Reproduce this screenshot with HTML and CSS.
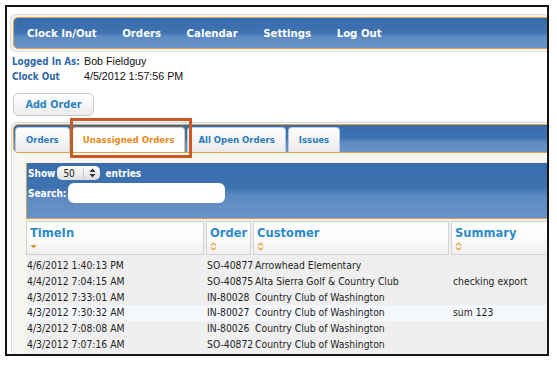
FILE: index.html
```html
<!DOCTYPE html>
<html lang="en">

<head>
    <meta charset="UTF-8">
    <meta name="viewport" content="width=device-width, initial-scale=1.0">
    <link rel="stylesheet" href="styles.css">
    <title>Unassigned Orders</title>
</head>

<body>
    <div class="frame">
        <div class="page">
            <div class="menu-wrap">
                <ul class="menu">
                    <li>Clock In/Out</li>
                    <li>Orders</li>
                    <li>Calendar</li>
                    <li>Settings</li>
                    <li>Log Out</li>
                </ul>
            </div>

            <div class="info">
                <span class="label">Logged In As:</span><span class="value">Bob Fieldguy</span>
                <span class="label">Clock Out</span><span class="value">4/5/2012 1:57:56 PM</span>
            </div>

            <button class="add-btn" type="button">Add Order</button>

            <div class="tabs">
                <ul class="tab-nav">
                    <li class="tab">Orders</li>
                    <li class="tab active">Unassigned Orders</li>
                    <li class="tab">All Open Orders</li>
                    <li class="tab">Issues</li>
                </ul>
                <div class="mark"></div>

                <div class="tab-panel">
                    <div class="dt-top">
                        <div class="dt-length">
                            <span>Show</span>
                            <span class="select">
                                <span class="select-val">50</span>
                                <svg width="7" height="10" viewBox="0 0 7 10">
                                    <path d="M0.5 4L3.5 0.5L6.5 4Z M0.5 6L3.5 9.5L6.5 6Z" fill="#333" />
                                </svg>
                            </span>
                            <span>entries</span>
                        </div>
                        <div class="dt-search">
                            <span>Search:</span>
                            <span class="search-box"></span>
                        </div>
                    </div>

                    <div class="dt-table">
                        <div class="dt-head">
                            <div class="th c-time">TimeIn
                                <svg class="sort" width="7" height="9" viewBox="0 0 7 9">
                                    <path d="M0.5 3H6.5L3.5 6.5Z" fill="#e5922a" />
                                </svg>
                            </div>
                            <div class="th c-order">Order
                                <svg class="sort" width="7" height="9" viewBox="0 0 7 9">
                                    <path d="M1 3.6L3.5 1.2L6 3.6M1 5.4L3.5 7.8L6 5.4" stroke="#e5a03a" stroke-width="1.2" fill="none" />
                                </svg>
                            </div>
                            <div class="th c-cust">Customer
                                <svg class="sort" width="7" height="9" viewBox="0 0 7 9">
                                    <path d="M1 3.6L3.5 1.2L6 3.6M1 5.4L3.5 7.8L6 5.4" stroke="#e5a03a" stroke-width="1.2" fill="none" />
                                </svg>
                            </div>
                            <div class="th c-sum">Summary
                                <svg class="sort" width="7" height="9" viewBox="0 0 7 9">
                                    <path d="M1 3.6L3.5 1.2L6 3.6M1 5.4L3.5 7.8L6 5.4" stroke="#e5a03a" stroke-width="1.2" fill="none" />
                                </svg>
                            </div>
                        </div>

                        <div class="dt-row"><span>4/6/2012 1:40:13 PM</span><span>SO-40877</span><span>Arrowhead Elementary</span><span></span></div>
                        <div class="dt-row"><span>4/4/2012 7:04:15 AM</span><span>SO-40875</span><span>Alta Sierra Golf &amp; Country Club</span><span>checking export</span></div>
                        <div class="dt-row"><span>4/3/2012 7:33:01 AM</span><span>IN-80028</span><span>Country Club of Washington</span><span></span></div>
                        <div class="dt-row hover"><span>4/3/2012 7:30:32 AM</span><span>IN-80027</span><span>Country Club of Washington</span><span>sum 123</span></div>
                        <div class="dt-row"><span>4/3/2012 7:08:08 AM</span><span>IN-80026</span><span>Country Club of Washington</span><span></span></div>
                        <div class="dt-row"><span>4/3/2012 7:07:16 AM</span><span>SO-40872</span><span>Country Club of Washington</span><span></span></div>
                    </div>
                </div>
            </div>
        </div>
    </div>
</body>

</html>
```

FILE: styles.css
```css
* {
    margin: 0;
    padding: 0;
    box-sizing: border-box;
}

body {
    background-color: white;
    font-family: "DejaVu Sans Condensed", "DejaVu Sans", sans-serif;
    font-stretch: condensed;
}

ul {
    list-style: none;
}

.frame {
    margin: 5px;
    width: 544px;
    height: 351px;
    border: 2px solid #151515;
    overflow: hidden;
}

.page {
    width: 620px;
    padding-left: 3px;
}

/* top menu */
.menu-wrap {
    margin-top: 7px;
    padding: 2px;
    border: 1px solid #dcdcdc;
    border-radius: 5px;
    background-color: #f3f3f3;
}

.menu {
    display: flex;
    height: 32px;
    align-items: center;
    padding-left: 13px;
    border: 1px solid #e5a04a;
    border-radius: 5px;
    background: linear-gradient(to bottom, #386cad 0%, #3e72b1 48%, #5d8ac3 62%, #6993c8 100%);

    li {
        color: white;
        font-weight: bold;
        font-size: 11.3px;
        padding-right: 25.5px;
    }
}

/* login info */
.info {
    display: grid;
    grid-template-columns: 72px auto;
    margin: 2px 0 0 2px;
    line-height: 15px;

    .label {
        color: #2f6aa5;
        font-weight: bold;
        font-size: 9.8px;
    }

    .value {
        font-family: "Liberation Sans", Arial, sans-serif;
        font-stretch: normal;
        font-size: 10.7px;
        color: #111;
    }
}

.add-btn {
    display: block;
    margin: 9px 0 0 3px;
    width: 81px;
    height: 23px;
    border: 1px solid #c9c9c9;
    border-radius: 5px;
    background: linear-gradient(to bottom, #ffffff, #ececec);
    color: #2f84c0;
    font-family: inherit;
    font-stretch: condensed;
    font-weight: bold;
    font-size: 10.8px;
}

/* tabs */
.tabs {
    position: relative;
    margin: 6px 0 0 1px;
    padding: 1px;
    border: 1px solid #d9d9d9;
    border-radius: 5px;
    background-color: #f6f6f4;
}

.tab-nav {
    display: flex;
    gap: 2px;
    height: 29px;
    padding: 2px 2px 0 1px;
    border: 1px solid #e2a14d;
    border-radius: 5px;
    background: linear-gradient(to bottom, #386cad 0%, #3e72b1 48%, #5d8ac3 62%, #6993c8 100%);

    .tab {
        height: 25px;
        line-height: 24px;
        padding: 0 10px;
        border: 1px solid #b9c8da;
        border-bottom: none;
        border-radius: 4px 4px 0 0;
        background: linear-gradient(to bottom, #ffffff, #eaeaea);
        color: #2b7bbb;
        font-weight: bold;
        font-size: 9.5px;
    }

    .active {
        background: white;
        border-color: #e8c49a;
        color: #e8891c;
    }
}

.mark {
    position: absolute;
    left: 58px;
    top: -5px;
    width: 122px;
    height: 40px;
    border: 3px solid #c95a22;
}

.tab-panel {
    padding: 10px 0 0 13px;
    background-color: #f8f6f1;
}

/* datatable controls */
.dt-top {
    height: 56px;
    padding: 3px 0 0 1px;
    border-left: 1px solid #cfa363;
    border-bottom: 1px solid #e2a14d;
    background: linear-gradient(to bottom, #386cad 0%, #3e72b1 45%, #5d8ac3 60%, #6993c8 100%);
    color: white;
    font-weight: bold;
    font-size: 10px;

    .dt-length {
        display: flex;
        align-items: center;
        gap: 2px;
        height: 14px;
    }

    .select {
        display: flex;
        align-items: center;
        width: 43px;
        height: 14px;
        margin-right: 3px;
        border-radius: 5px;
        background: linear-gradient(to bottom, #fdfdfd, #dedede);
        color: #222;
        font-weight: normal;

        .select-val {
            width: 27px;
            padding-left: 6px;
            border-right: 1px solid #c4c4c4;
        }

        svg {
            margin-left: 5px;
        }
    }

    .dt-search {
        display: flex;
        align-items: center;
        gap: 2px;
        height: 20px;
        margin-top: 3px;
    }

    .search-box {
        width: 157px;
        height: 20px;
        border-radius: 6px;
        background-color: white;
    }
}

/* table */
.dt-table {
    padding-top: 2px;
    background-color: #efefef;
}

.dt-head {
    display: flex;
    gap: 2px;
    margin-bottom: 3px;

    .th {
        display: flex;
        flex-direction: column;
        height: 34px;
        padding: 2px 3px 0;
        border: 1px solid #d4d4d4;
        background: linear-gradient(to bottom, #ffffff 0%, #fbfbfb 55%, #eeeeee 100%);
        color: #2f8bc8;
        font-weight: bold;
        font-size: 12.8px;
        line-height: 17px;
    }

    .sort {
        margin-top: 1px;
    }

    .c-time { width: 178px; }
    .c-order { width: 45px; }
    .c-cust { width: 196px; }
    .c-sum { width: 150px; }
}

.dt-row {
    display: grid;
    grid-template-columns: 180px 47px 198px 200px;
    height: 15.8px;
    line-height: 15.8px;
    font-size: 10.3px;
    color: #1e1e1e;
    white-space: nowrap;

    span {
        padding-left: 1px;
    }

    span:nth-child(n+3) {
        padding-left: 2px;
    }
}

.dt-row.hover {
    background-color: #f4f7fb;
}
```
